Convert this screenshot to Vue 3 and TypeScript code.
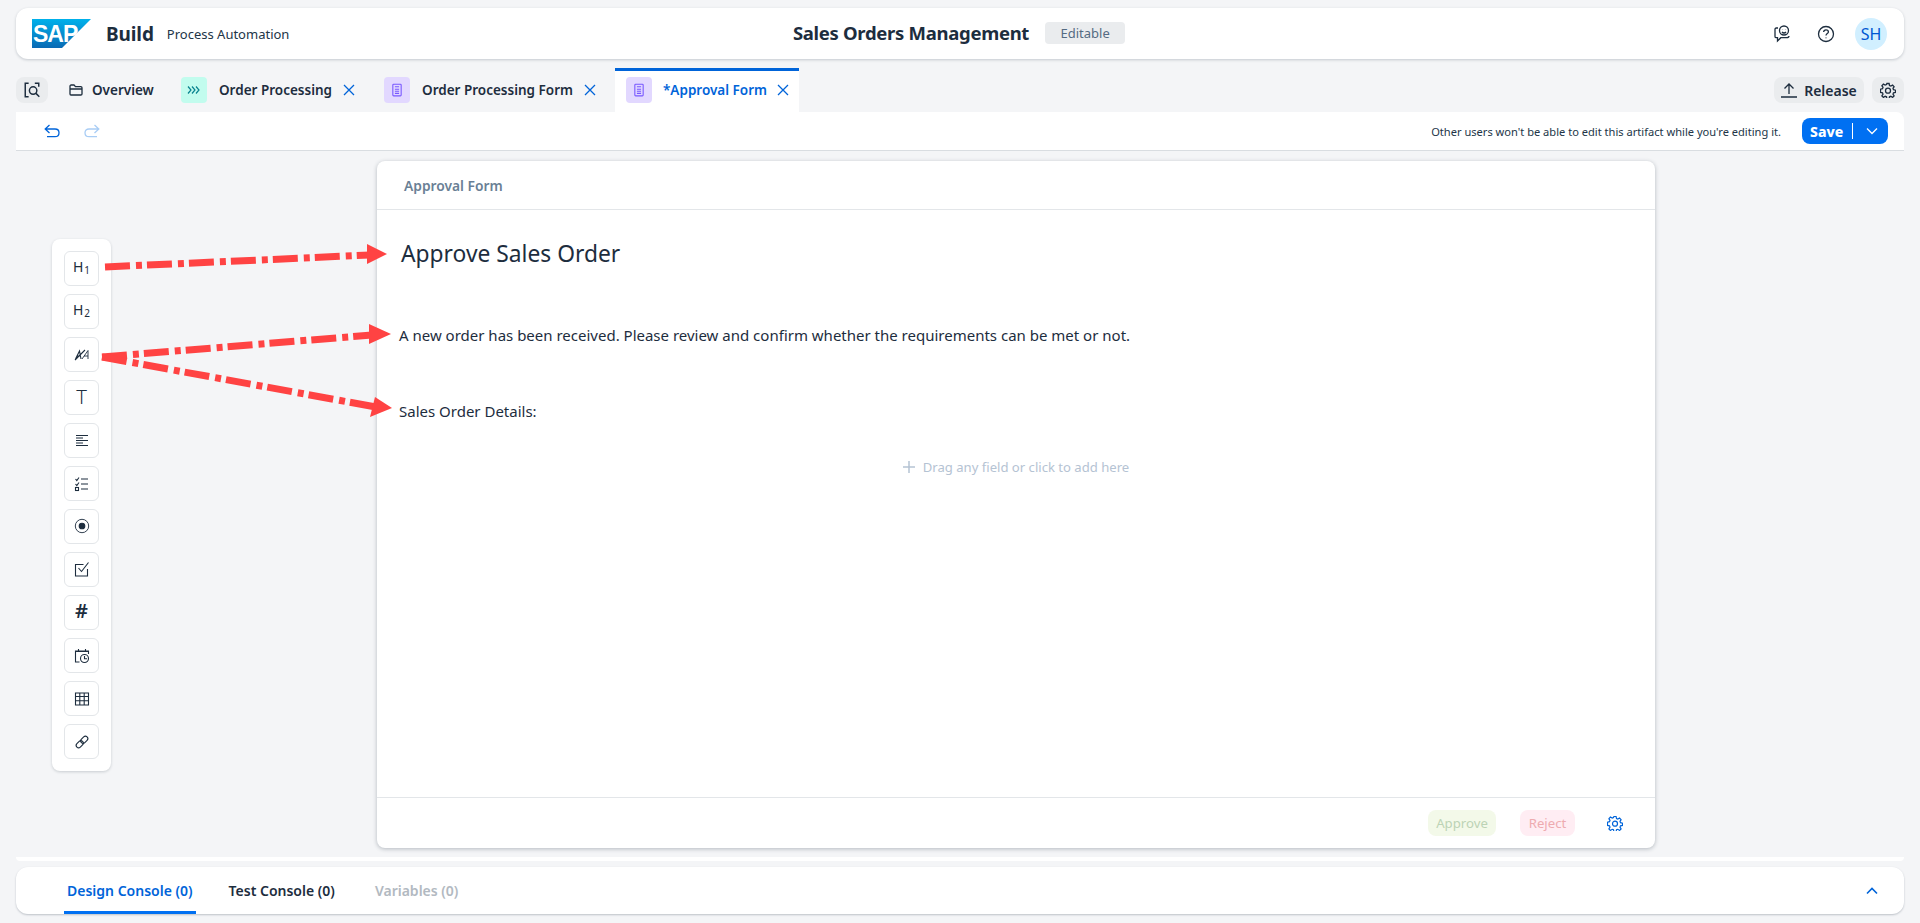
<script setup lang="ts">
interface Tab { label: string; tile: 'mint' | 'purple'; active?: boolean }
const tabs: Tab[] = [
  { label: 'Order Processing', tile: 'mint' },
  { label: 'Order Processing Form', tile: 'purple' },
  { label: '*Approval Form', tile: 'purple', active: true },
]
const tools = ['h1', 'h2', 'para', 'text', 'area', 'checklist', 'radio', 'check', 'num', 'date', 'table', 'link']
const consoles = [
  { label: 'Design Console (0)', state: 'active' },
  { label: 'Test Console (0)', state: 'idle' },
  { label: 'Variables (0)', state: 'muted' },
]
const gear = 'M6.9 1.5h2.2l.4 2 1.3.6 1.8-1 1.5 1.6-1.1 1.7.5 1.3 2 .5v2.2l-2 .4-.5 1.3 1.1 1.8-1.5 1.5-1.8-1.1-1.3.5-.4 2H6.9l-.4-2-1.3-.5-1.8 1.1-1.5-1.5 1.1-1.8-.5-1.3-2-.4V7.200l2-.5.5-1.300-1.100-1.700 1.500-1.600 1.800 1 1.300-.6z'
</script>

<template>
  <div class="app">
    <header class="shell">
      <div class="brand">
        <svg class="logo" viewBox="0 0 59 29" width="59" height="29">
          <defs>
            <linearGradient id="sapg" x1="0" y1="0" x2="0" y2="1">
              <stop offset="0" stop-color="#00b1eb" />
              <stop offset="1" stop-color="#0a6ab4" />
            </linearGradient>
          </defs>
          <path d="M0 0H59L30 29H0Z" fill="url(#sapg)" />
          <text x="1" y="23" class="logo-text">SAP</text>
        </svg>
        <span class="build">Build</span>
        <span class="product">Process Automation</span>
      </div>
      <div class="project">
        <span class="project-name">Sales Orders Management</span>
        <span class="badge">Editable</span>
      </div>
      <div class="shell-actions">
        <svg class="shell-icon feedback" viewBox="0 0 18 18" width="18" height="18">
          <path d="M5 3H3.200C2.500 3 2 3.500 2 4.200V11.500C2 12.200 2.500 12.700 3.200 12.700H4.500V16L7.800 12.700H13.500C15 12.700 16 12 16 11" />
          <circle cx="11" cy="5.500" r="4.500" />
          <path d="M9 7C10 8.300 12 8.300 13 7" />
          <path d="M9.500 4.200V4.600M12.500 4.200V4.600" />
        </svg>
        <svg class="shell-icon help" viewBox="0 0 18 18" width="18" height="18">
          <circle cx="9" cy="9" r="7.500" />
          <path d="M6.600 7C6.800 5.500 7.800 4.900 9 4.900C10.400 4.900 11.400 5.800 11.400 7C11.400 8.500 9 8.700 9 10.500" />
          <path d="M9 12.400V13.200" />
        </svg>
        <span class="avatar">SH</span>
      </div>
    </header>

    <nav class="tabbar">
      <button class="search-btn">
        <svg viewBox="0 0 16 16" width="18" height="18" class="ink">
          <path d="M5 2H2V14H5M10.500 2H14V5" />
          <circle cx="9" cy="8.500" r="3.300" />
          <path d="M11.500 11L14.500 14" />
        </svg>
      </button>
      <div class="overview">
        <svg viewBox="0 0 14 12" width="14" height="12" class="ink">
          <path d="M1 10V2.200C1 1.500 1.500 1 2.200 1H5L6.500 2.600H11.800C12.500 2.600 13 3.100 13 3.800V10C13 10.600 12.500 11 11.800 11H2C1.400 11 1 10.600 1 10ZM1 5H13" />
        </svg>
        <span>Overview</span>
      </div>
      <div v-for="tab in tabs" :key="tab.label" class="tab" :class="{ active: tab.active }">
        <span class="tile" :class="tab.tile">
          <svg v-if="tab.tile === 'mint'" viewBox="0 0 14 10" width="14" height="10" class="mint-glyph">
            <path d="M1 1.500L4 5L1 8.500M5 1.500L8 5L5 8.500M9 1.500L12 5L9 8.500" />
          </svg>
          <svg v-else viewBox="0 0 12 16" width="10" height="14" class="purple-glyph">
            <rect x="1" y="1" width="10" height="14" rx="1" />
            <path d="M3.500 4H8.500M3.500 7H8.500M3.500 9.500H8.500M3.500 12H8.500" />
          </svg>
        </span>
        <span class="tab-label">{{ tab.label }}</span>
        <svg class="tab-close" viewBox="0 0 12 12" width="12" height="12">
          <path d="M1 1L11 11M11 1L1 11" />
        </svg>
      </div>
      <div class="tab-actions">
        <button class="release">
          <svg viewBox="0 0 16 16" width="16" height="16" class="ink">
            <path d="M8 12V2M3.500 6.500L8 2L12.500 6.500M0 15H16" />
          </svg>
          Release
        </button>
        <button class="settings">
          <svg viewBox="0 0 16 16" width="16" height="16" class="ink">
            <path :d="gear" />
            <circle cx="8" cy="8.700" r="2.500" />
          </svg>
        </button>
      </div>
    </nav>

    <section class="toolbar">
      <svg class="history" viewBox="0 0 16 14" width="16" height="14">
        <path d="M5.500 1L1.200 5L5.500 9M1.500 5H11C13.500 5 15 6.500 15 8.700C15 11 13.500 12.700 11 12.700H3" />
      </svg>
      <svg class="history disabled" viewBox="0 0 16 14" width="16" height="14">
        <path d="M10.500 1L14.800 5L10.500 9M14.500 5H5C2.500 5 1 6.500 1 8.700C1 11 2.500 12.700 5 12.700H13" />
      </svg>
      <span class="notice">Other users won't be able to edit this artifact while you're editing it.</span>
      <button class="save">
        <span class="save-label">Save</span>
        <span class="save-divider"></span>
        <svg viewBox="0 0 12 8" width="12" height="8"><path d="M1 1.500L6 6.500L11 1.500" /></svg>
      </button>
    </section>

    <main class="workspace">
      <aside class="palette">
        <button v-for="tool in tools" :key="tool" class="tool">
          <span v-if="tool === 'h1'" class="glyph">H<sub>1</sub></span>
          <span v-else-if="tool === 'h2'" class="glyph">H<sub>2</sub></span>
          <span v-else-if="tool === 'text'" class="glyph big">T</span>
          <span v-else-if="tool === 'num'" class="glyph hash">#</span>
          <svg v-else viewBox="0 0 16 16" width="16" height="16" class="tool-icon">
            <template v-if="tool === 'para'">
              <path d="M1.500 12L5.500 4L7 12M3 9H6.700M1 13L11 3" />
              <path class="hair" d="M8 12L14 3.500V12M10 9H14" />
            </template>
            <template v-else-if="tool === 'area'">
              <path d="M2 2.500H14M2 5H9M2 7.500H14M2 10H9M2 12.500H14" />
            </template>
            <template v-else-if="tool === 'checklist'">
              <path d="M7 3H14M7 8H14M7 13H14M1.500 3L2.800 4.500L5 1.500M1.500 8L2.800 9.500L5 6.500" />
              <rect x="1.500" y="11.500" width="3" height="3" />
            </template>
            <template v-else-if="tool === 'radio'">
              <circle cx="8" cy="7" r="6.700" class="hair" />
              <circle cx="8" cy="7" r="2.800" class="solid" />
            </template>
            <template v-else-if="tool === 'check'">
              <path d="M13.500 7V14H1.500V2.500H9.500M4.500 6L7.500 9.500L14.500 0.500" />
            </template>
            <template v-else-if="tool === 'date'">
              <path d="M5.500 14H1.500V3H14.500V6M1.500 3V3.500H14.500M4.500 1V3M11.500 1V3" />
              <circle cx="10.500" cy="10.500" r="4" />
              <path d="M10.500 8V10.700H13" />
            </template>
            <template v-else-if="tool === 'table'">
              <path d="M1.500 2H14.500V14H1.500ZM1.500 5.500H14.500M1.500 9.700H14.500M5.800 2V14M10.200 2V14" />
            </template>
            <template v-else-if="tool === 'link'">
              <rect x="0.800" y="5.600" width="8" height="4.800" rx="2.400" transform="rotate(-45 8 8)" />
              <rect x="7.200" y="5.600" width="8" height="4.800" rx="2.400" transform="rotate(-45 8 8)" />
            </template>
          </svg>
        </button>
      </aside>

      <article class="form-card">
        <div class="form-head">Approval Form</div>
        <div class="form-body">
          <h1 class="form-title">Approve Sales Order</h1>
          <p class="form-text first">A new order has been received. Please review and confirm whether the requirements can be met or not.</p>
          <p class="form-text second">Sales Order Details:</p>
          <div class="drop-hint">
            <svg viewBox="0 0 12 12" width="12" height="12"><path d="M6 0V12M0 6H12" /></svg>
            <span>Drag any field or click to add here</span>
          </div>
        </div>
        <div class="form-foot">
          <span class="pill approve">Approve</span>
          <span class="pill reject">Reject</span>
          <svg class="foot-gear" viewBox="0 0 16 16" width="16" height="16">
            <path :d="gear" />
            <circle cx="8" cy="8.700" r="2.500" />
          </svg>
        </div>
      </article>

      <svg class="arrows" width="1920" height="923" viewBox="0 0 1920 923">
        <g class="arrow-lines">
          <path d="M105 267L370 255" />
          <path d="M102 357L372 335" />
          <path d="M102 357L376 407" />
        </g>
        <g class="arrow-heads">
          <path d="M367 244L387 254L367 264Z" />
          <path d="M369 324L391 334L369 344Z" />
          <path d="M375 397L392 408L370 417Z" />
        </g>
      </svg>
    </main>
    <div class="workspace-end"></div>

    <footer class="console">
      <span v-for="c in consoles" :key="c.label" class="console-tab" :class="c.state">{{ c.label }}</span>
      <svg class="console-toggle" viewBox="0 0 12 8" width="12" height="8"><path d="M1 6.500L6 1.500L11 6.500" /></svg>
    </footer>
  </div>
</template>

<style>
html, body { margin: 0; background: #f4f5f7; }
</style>

<style scoped>
.app {
  height: 923px;
  box-sizing: border-box;
  padding: 8px 16px 0;
  display: flex;
  flex-direction: column;
  overflow: hidden;
  position: relative;
  font-family: "Noto Sans", "Open Sans", sans-serif;
  color: #1d2d3e;
  background: #f4f5f7;
}
button { font-family: inherit; border: 0; padding: 0; color: inherit; }
svg path, svg circle, svg rect { fill: none; }

.shell {
  height: 51px;
  flex: none;
  background: #fff;
  border-radius: 12px;
  box-shadow: 0 1px 3px rgba(29, 45, 62, .22);
  display: grid;
  grid-template-columns: 1fr auto 1fr;
  align-items: center;
  padding: 0 16px;
}
.brand { display: flex; align-items: center; }
.logo { display: block; }
svg.logo path { fill: url(#sapg); }
.logo-text { font: 700 23px "Liberation Sans", sans-serif; fill: #fff; letter-spacing: -1px; }
.build { margin-left: 15px; font-size: 19px; font-weight: 700; letter-spacing: -.1px; }
.product { margin-left: 13px; font-size: 13px; color: #223548; }
.project { display: flex; align-items: center; margin-top: -2px; margin-left: -2px; }
.project-name { font-size: 18.500px; font-weight: 700; letter-spacing: -.3px; white-space: nowrap; }
.badge {
  margin-left: 16px;
  width: 80px;
  height: 22px;
  border-radius: 4px;
  background: #eaecee;
  color: #556b82;
  font-size: 13px;
  display: flex;
  align-items: center;
  justify-content: center;
}
.shell-actions { display: flex; align-items: center; justify-content: flex-end; padding-right: 1px; }
.shell-icon path, .shell-icon circle { stroke: #1d2d3e; stroke-width: 1.300; }
.help { margin-left: 26px; }
.avatar {
  margin-left: 20px;
  width: 32px;
  height: 32px;
  border-radius: 50%;
  background: #d1efff;
  color: #0057d2;
  font-size: 16px;
  display: flex;
  align-items: center;
  justify-content: center;
}
.ink path, .ink circle { stroke: #1d2d3e; stroke-width: 1.300; }

.tabbar {
  height: 44px;
  margin-top: 9px;
  flex: none;
  display: flex;
  align-items: flex-start;
}
.search-btn {
  width: 32px;
  height: 26px;
  margin-top: 9px;
  border-radius: 8px;
  background: #eaecee;
  display: flex;
  align-items: center;
  justify-content: center;
}
.overview {
  margin: 9px 0 0 21px;
  height: 26px;
  display: flex;
  align-items: center;
  gap: 9px;
  font-size: 13.500px;
  font-weight: 600;
  width: 112px;
}
.tab {
  height: 44px;
  box-sizing: border-box;
  border-top: 3px solid transparent;
  display: flex;
  align-items: center;
  padding-bottom: 3px;
  margin-right: 29px;
  font-size: 13.500px;
  font-weight: 600;
  white-space: nowrap;
}
.tab.active {
  margin-left: -10px;
  margin-right: 0;
  padding: 0 10px 3px 11px;
  width: 184px;
  box-sizing: border-box;
  background: #fff;
  border-top-color: #0064d9;
  color: #0064d9;
}
.tab.active .tab-label { margin-left: 11px; }
.tab.active .tab-close { margin-left: 10px; }
.tile {
  width: 26px;
  height: 26px;
  border-radius: 4px;
  display: flex;
  align-items: center;
  justify-content: center;
  flex: none;
}
.tile.mint { background: #c2fcee; }
.tile.purple { background: #e2d8ff; }
.mint-glyph path { stroke: #07838f; stroke-width: 1.200; }
.purple-glyph rect, .purple-glyph path { stroke: #7858ff; stroke-width: 1.300; }
.tab-label { margin-left: 12px; }
.tab-close { margin-left: 11px; flex: none; }
.tab-close path { stroke: #0064d9; stroke-width: 1.300; }
.tab-actions { margin-left: auto; margin-top: 9px; display: flex; gap: 8px; }
.release {
  width: 90px;
  height: 26px;
  border-radius: 8px;
  background: #eaecee;
  font-size: 14px;
  font-weight: 600;
  display: flex;
  align-items: center;
  justify-content: center;
  gap: 7px;
}
.settings {
  width: 32px;
  height: 26px;
  border-radius: 8px;
  background: #eaecee;
  display: flex;
  align-items: center;
  justify-content: center;
}

.toolbar {
  height: 39px;
  flex: none;
  box-sizing: border-box;
  background: #fff;
  border-bottom: 1px solid #d9dde1;
  display: flex;
  align-items: center;
  padding: 0 16px 0 28px;
  border-top-right-radius: 8px;
}
.history { margin-right: 24px; }
.history path { stroke: #0064d9; stroke-width: 1.300; }
.history.disabled path { stroke: #a9cdf5; }
.notice { margin-left: auto; font-size: 11.100px; color: #223548; }
.save {
  margin-left: 21px;
  width: 86px;
  height: 26px;
  border-radius: 8px;
  background: #0070f2;
  color: #fff;
  display: flex;
  align-items: center;
  padding-left: 8px;
  box-sizing: border-box;
}
.save-label { font-size: 14px; font-weight: 800; }
.save-divider { width: 1px; height: 16px; background: #fff; margin: 0 13px 0 9px; }
.save svg path { stroke: #fff; stroke-width: 1.300; }

.workspace {
  height: 706px;
  flex: none;
  display: flex;
  align-items: flex-start;
}
.palette {
  width: 59px;
  box-sizing: border-box;
  margin: 88px 0 0 36px;
  padding: 12px 12px;
  background: #fff;
  border-radius: 8px;
  box-shadow: 0 1px 3px rgba(29, 45, 62, .2);
  display: flex;
  flex-direction: column;
  gap: 8px;
}
.tool {
  width: 35px;
  height: 35px;
  box-sizing: border-box;
  background: #fff;
  border: 1px solid #e3e6e9;
  border-radius: 6px;
  display: flex;
  align-items: center;
  justify-content: center;
}
.glyph { font-size: 14px; line-height: 1; margin-top: -2px; }
.glyph sub { font-size: 10px; vertical-align: -2px; margin-left: 1px; }
.glyph.big { font-size: 20px; font-weight: 300; margin-top: -1px; }
.glyph.hash { font-size: 20px; font-weight: 600; margin-top: -3px; }
.tool-icon { overflow: visible; }
.tool-icon path, .tool-icon circle, .tool-icon rect { stroke: #1d2d3e; stroke-width: 1.100; }
.tool-icon .hair { stroke-width: .9; }
.tool-icon .solid { fill: #1d2d3e; }

.form-card {
  width: 1278px;
  height: 687px;
  margin: 10px 0 0 266px;
  box-sizing: border-box;
  background: #fff;
  border-radius: 8px;
  box-shadow: 0 1px 4px rgba(29, 45, 62, .3);
  display: flex;
  flex-direction: column;
}
.form-head {
  height: 49px;
  flex: none;
  box-sizing: border-box;
  padding: 0 0 0 27px;
  border-bottom: 1px solid #e3e6e9;
  display: flex;
  align-items: center;
  font-size: 13.800px;
  font-weight: 600;
  color: #6a7f95;
}
.form-body { flex: 1; display: flex; flex-direction: column; }
.form-title { margin: 27px 0 0 24px; font-size: 22.800px; font-weight: 400; line-height: 34px; }
.form-text { margin: 0 0 0 22px; font-size: 15px; line-height: 22px; }
.form-text.first { margin-top: 53px; }
.form-text.second { margin-top: 54px; }
.drop-hint {
  margin-top: 36px;
  display: flex;
  align-items: center;
  justify-content: center;
  gap: 8px;
  font-size: 13.100px;
  color: #b5c3d3;
}
.drop-hint path { stroke: #b5c3d3; stroke-width: 1.500; }
.form-foot {
  height: 51px;
  flex: none;
  box-sizing: border-box;
  border-top: 1px solid #e3e6e9;
  display: flex;
  align-items: center;
  justify-content: flex-end;
  padding-right: 32px;
}
.pill {
  height: 26px;
  border-radius: 8px;
  font-size: 13.200px;
  display: flex;
  align-items: center;
  justify-content: center;
}
.pill.approve { width: 68px; background: #f3f9e9; color: #bcd3b5; }
.pill.reject { width: 55px; margin-left: 24px; background: #ffedf3; color: #eeabb0; }
.foot-gear { margin-left: 32px; }
.foot-gear path, .foot-gear circle { stroke: #0064d9; stroke-width: 1.200; }

.arrows { position: absolute; left: 0; top: 0; pointer-events: none; }
.arrow-lines path {
  stroke: #ff4343;
  stroke-width: 7;
  stroke-dasharray: 25 6 6 5;
  stroke-linecap: butt;
}
svg.arrows .arrow-heads path { fill: #ff4343; }

.workspace-end {
  height: 4px;
  flex: none;
  background: #fff;
  border-radius: 0 0 10px 10px;
}
.console {
  height: 47px;
  flex: none;
  margin-top: 6px;
  box-sizing: border-box;
  background: #fff;
  border-radius: 12px;
  box-shadow: 0 1px 2px rgba(29, 45, 62, .25);
  display: flex;
  align-items: stretch;
  padding: 0 26px 0 48px;
  font-size: 14px;
  font-weight: 600;
}
.console-tab {
  display: flex;
  align-items: center;
  padding: 3px 3px 0;
  margin-right: 30px;
  box-sizing: border-box;
  border-bottom: 3px solid transparent;
}
.console-tab.idle { margin-right: 34px; }
.console-tab.active { color: #0064d9; border-bottom-color: #0070f2; }
.console-tab.muted { color: #b2b9c1; }
.console-toggle { margin: auto 0 auto auto; }
.console-toggle path { stroke: #0064d9; stroke-width: 1.600; }
</style>
